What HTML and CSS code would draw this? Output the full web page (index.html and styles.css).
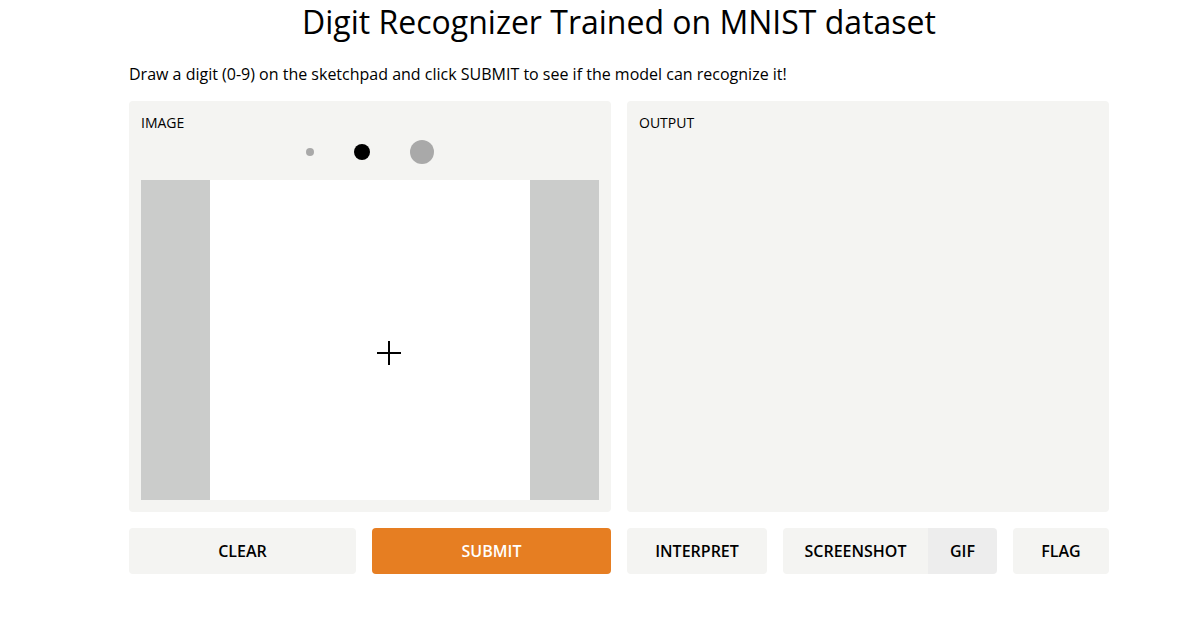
FILE: index.html
```html
<!DOCTYPE html>
<html>
<head>
<meta charset="utf-8">
<link rel="stylesheet" href="styles.css">
</head>
<body>
<div class="page">
  <h1 class="title">Digit Recognizer Trained on MNIST dataset</h1>
  <p class="desc">Draw a digit (0-9) on the sketchpad and click SUBMIT to see if the model can recognize it!</p>
  <div class="panels">
    <div class="col">
      <div class="panel">
        <div class="label">IMAGE</div>
        <div class="brushes">
          <span class="dot dot-s"></span>
          <span class="dot dot-m"></span>
          <span class="dot dot-l"></span>
        </div>
        <div class="canvas-wrap">
          <div class="canvas"></div>
          <div class="cursor"><span class="ch"></span><span class="cv"></span></div>
        </div>
      </div>
      <div class="btns">
        <button class="btn clear">CLEAR</button>
        <button class="btn submit">SUBMIT</button>
      </div>
    </div>
    <div class="col">
      <div class="panel">
        <div class="label">OUTPUT</div>
      </div>
      <div class="btns">
        <button class="btn interpret">INTERPRET</button>
        <div class="btn-group">
          <button class="btn shot">SCREENSHOT</button>
          <button class="btn gif">GIF</button>
        </div>
        <button class="btn flag">FLAG</button>
      </div>
    </div>
  </div>
</div>
</body>
</html>
```

FILE: styles.css
```css
* { box-sizing: border-box; }
html, body { margin: 0; padding: 0; background: #fff; }
body { font-family: "Open Sans", "Liberation Sans", sans-serif; color: #000; }
.page { width: 980px; margin: 0 0 0 129px; }
.title {
  margin: 0;
  padding-top: 2px;
  height: 46px;
  text-align: center;
  font-size: 32px;
  font-weight: 400;
  line-height: 40px;
}
.desc {
  margin: 0;
  padding-top: 16px;
  height: 55px;
  font-size: 16px;
  line-height: 24px;
}
.panels { display: flex; gap: 16px; }
.col { flex: 1; display: flex; flex-direction: column; gap: 16px; }
.panel {
  background: #f4f4f2;
  border-radius: 4px;
  height: 411px;
  padding: 12px;
}
.label { font-size: 14px; line-height: 20px; height: 20px; font-weight: 500; }
.brushes {
  display: flex;
  justify-content: center;
  align-items: center;
  gap: 40px;
  height: 38px;
  margin-bottom: 9px;
}
.dot { display: block; border-radius: 50%; background: #a9a9a9; }
.dot-s { width: 8px; height: 8px; }
.dot-m { width: 16px; height: 16px; background: #000; }
.dot-l { width: 24px; height: 24px; }
.canvas-wrap {
  position: relative;
  height: 320px;
  background: #cbcccb;
  display: flex;
  justify-content: center;
}
.canvas { width: 320px; height: 320px; background: #fff; }
.cursor { position: absolute; left: 236px; top: 161px; width: 24px; height: 24px; }
.cursor .ch { position: absolute; left: 0; top: 11px; width: 24px; height: 2px; background: #000; }
.cursor .cv { position: absolute; left: 11px; top: 0; width: 2px; height: 24px; background: #000; }
.btns { display: flex; gap: 16px; }
.btn {
  height: 46px;
  border: none;
  border-radius: 4px;
  background: #f4f4f2;
  font-family: "Open Sans", "Liberation Sans", sans-serif;
  font-size: 16px;
  font-weight: 600;
  color: #000;
  padding: 0;
}
.clear { width: 227px; }
.submit { flex: 1; background: #e67e22; color: #fff; }
.interpret { width: 140px; }
.btn-group { display: flex; width: 214px; border-radius: 4px; overflow: hidden; }
.btn-group .btn { border-radius: 0; }
.shot { flex: 1; }
.gif { width: 69px; background: #ededed; }
.flag { flex: 1; }
```
